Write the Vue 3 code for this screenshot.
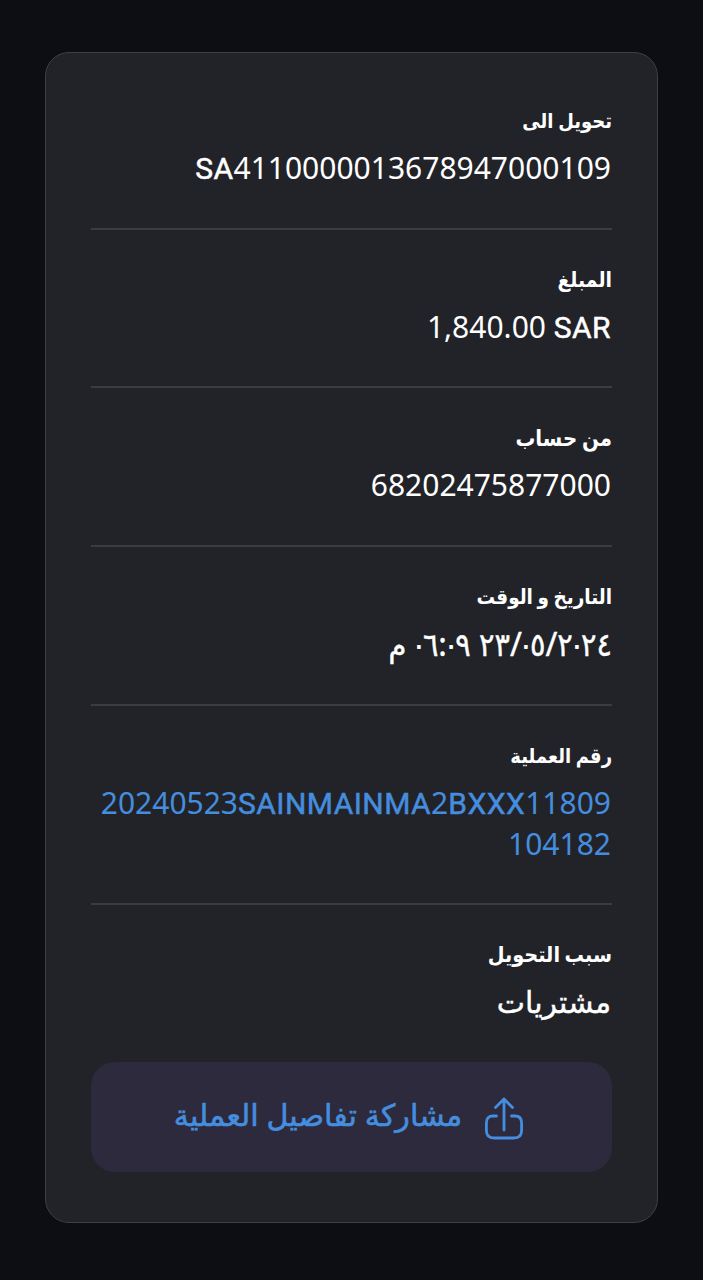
<script setup>
const rows = [
  { label: 'تحويل الى', parts: [{ t: 'SA', l: 1 }, { t: '4110000013678947000109' }] },
  { label: 'المبلغ', parts: [{ t: '1,840.00 ' }, { t: 'SAR', l: 1 }] },
  { label: 'من حساب', parts: [{ t: '68202475877000' }] },
  { label: 'التاريخ و الوقت', date: true, arabic: '٢٣/٠٥/٢٠٢٤ ٠٦:٠٩ م' },
  { label: 'رقم العملية', blue: true, parts: [{ t: '20240523' }, { t: 'SAINMAINMA', l: 1 }, { t: '2' }, { t: 'BXXX', l: 1 }, { t: '11809' }, { br: 1 }, { t: '104182' }] },
  { label: 'سبب التحويل', arabic: 'مشتريات' },
]
const pieces = (r) => (r.date ? r.arabic.split(/(٠)/) : [r.arabic])
</script>

<template>
  <main class="screen">
    <section class="card" dir="rtl">
      <div v-for="r in rows" :key="r.label" class="row">
        <div class="label">{{ r.label }}</div>
        <div v-if="r.arabic" class="value ar" :class="{ date: r.date }"><span v-for="(s, i) in pieces(r)" :key="i" :class="{ zero: s === '٠' }">{{ s }}</span></div>
        <div v-else class="value" :class="{ blue: r.blue }" dir="ltr"><template v-for="(p, i) in r.parts" :key="i"><br v-if="p.br"><span v-else :class="{ latin: p.l }">{{ p.t }}</span></template></div>
      </div>
      <button class="share">
        <svg width="40" height="44" viewBox="0 0 40 44" fill="none" stroke="#458dde" stroke-width="2.8" stroke-linecap="round" stroke-linejoin="round">
          <path d="M20 34V3M11.500 11.500L20 3l8.500 8.500M12.500 20H9Q2.400 20 2.400 27V34.500Q2.400 42 10 42H30Q37.600 42 37.600 34.500V27Q37.600 20 31 20H27.500" />
        </svg>
        <span>مشاركة تفاصيل العملية</span>
      </button>
    </section>
  </main>
</template>

<style scoped>
.screen { box-sizing: border-box; height: 1280px; padding: 52px 45px 56px; background: #0d0e13; }
.card { box-sizing: border-box; height: 1171px; padding: 18px 45px; border: 1.5px solid #3e3f43; border-radius: 24px; background: #222328; color: #fff; font-family: "Noto Sans", "DejaVu Sans", sans-serif; }
.row { box-sizing: border-box; height: 158.7px; padding-top: 35px; border-bottom: 2px solid #3b3c41; text-align: right; }
.row:nth-child(5) { height: 199px; }
.row:nth-child(6) { height: 157px; border: 0; }
.label { height: 28px; line-height: 28px; font-family: "Noto Sans", "DejaVu Sans Condensed", "DejaVu Sans", sans-serif; font-size: 21px; font-weight: 700; word-spacing: -1px; }
.row:nth-child(1) .label, .row:nth-child(5) .label { font-size: 20px; line-height: 30px; word-spacing: -0.5px; }
.row:nth-child(3) .label { font-size: 22px; }
.row:nth-child(4) .label { font-size: 20.5px; word-spacing: -0.8px; }
.row:nth-child(6) .label { font-size: 21.5px; }
.value { margin-top: 14px; padding-right: 1px; font-size: 30px; line-height: 40px; white-space: nowrap; }
.latin { font-family: Roboto, sans-serif; -webkit-text-stroke: 0.5px currentColor; letter-spacing: 0.45px; }
.ar { -webkit-text-stroke: 0.4px currentColor; }
.date { height: 40px; font-family: "Noto Sans", "DejaVu Sans Condensed", "DejaVu Sans", sans-serif; font-size: 32px; letter-spacing: -1.7px; padding-right: 0; }
.zero { font-size: 17px; line-height: 1; letter-spacing: -0.4px; vertical-align: 4px; -webkit-text-stroke: 1.8px currentColor; }
.blue { color: #458dde; }
.share { display: flex; width: 100%; height: 110px; padding: 0 5px 0 0; align-items: center; justify-content: center; gap: 22px; border: 0; border-radius: 24px; background: #2c2a3c; color: #458dde; font: 500 30.2px "Noto Sans", "DejaVu Sans", sans-serif; }
.share svg { margin-top: 2px; }
.share span { margin-top: -4px; -webkit-text-stroke: 0.6px currentColor; }
</style>
<style>body { background: #0d0e13; }</style>
